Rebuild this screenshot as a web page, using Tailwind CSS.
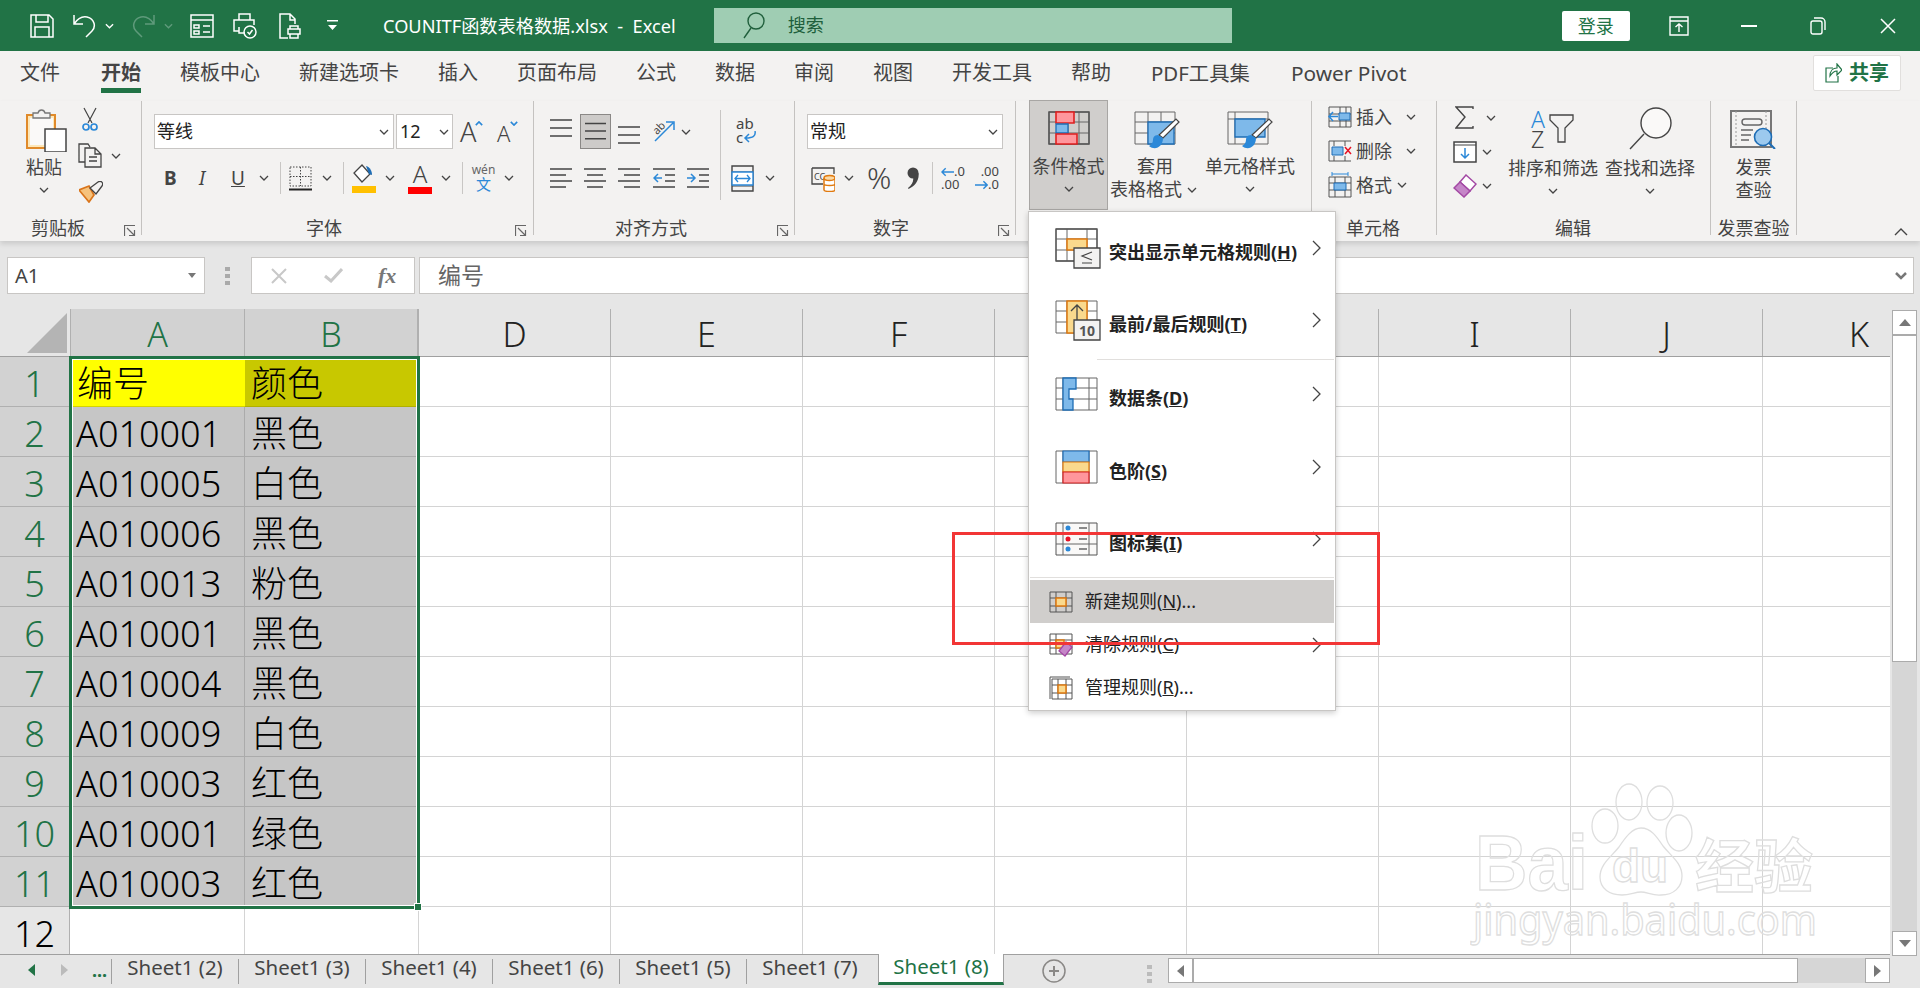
<!DOCTYPE html>
<html lang="zh-CN">
<head>
<meta charset="utf-8">
<title>COUNITF函数表格数据.xlsx - Excel</title>
<script src="https://cdn.jsdelivr.net/npm/@tailwindcss/browser@4"></script>
</head>
<body class="m-0 w-[1920px] h-[988px] overflow-hidden bg-[#e6e6e6] text-[#444] [font-family:'Noto_Sans','Noto_Sans_CJK_SC',sans-serif]">
<svg class="hidden">
<symbol id="chev" viewBox="0 0 10 6"><path d="M1 1l4 4 4-4" fill="none" stroke="#444" stroke-width="1.3"/></symbol>
<symbol id="exp" viewBox="0 0 12 12"><path d="M.5 11V.5H11M3 3l7 7M5 10.500h5.500V5" fill="none" stroke="#666" stroke-width="1.200"/></symbol>
<symbol id="right" viewBox="0 0 9 16"><path d="M1 1l7 7-7 7" fill="none" stroke="#444" stroke-width="1.300"/></symbol>
<symbol id="lines" viewBox="0 0 22 22"><path d="M0 2h22M0 10h22M0 18h22" stroke="#444" stroke-width="1.500"/></symbol>
</svg>

<!-- Title bar -->
<header class="flex items-center h-[51px] bg-[#217346] text-white">
  <svg class="ml-[30px] w-[24px] h-[24px]" viewBox="0 0 24 24" fill="none" stroke="#fff" stroke-width="1.500"><path d="M1 1h18l4 4v18H1zM6 1v7h12V1M5 23v-10h14v10"/></svg>
  <svg class="ml-[19px] w-[23px] h-[24px]" viewBox="0 0 23 24" fill="none" stroke="#fff" stroke-width="1.500"><path d="M1 1v9h9M1 10c4-6 8-8 13-7 8 2 9 10 5 14l-6 6"/></svg>
  <svg class="ml-[9px] w-[9px] h-[6px]" viewBox="0 0 10 6" fill="none" stroke="#fff" stroke-width="1.500"><path d="M1 1l4 4 4-4"/></svg>
  <svg class="ml-[18px] w-[23px] h-[24px]" viewBox="0 0 23 24" fill="none" stroke="#5f9a7b" stroke-width="1.500"><path d="M22 1v9h-9M22 10c-4-6-8-8-13-7-8 2-9 10-5 14l6 6"/></svg>
  <svg class="ml-[9px] w-[9px] h-[6px]" viewBox="0 0 10 6" fill="none" stroke="#5f9a7b" stroke-width="1.500"><path d="M1 1l4 4 4-4"/></svg>
  <svg class="ml-[17px] w-[24px] h-[24px]" viewBox="0 0 24 24" fill="none" stroke="#fff" stroke-width="1.500"><path d="M1 1h22v22H1zM1 6h22M4 11h5v3H4zM4 17h5v3H4zM13 12h7M13 18h7"/></svg>
  <svg class="ml-[19px] w-[24px] h-[26px]" viewBox="0 0 24 26" fill="none" stroke="#fff" stroke-width="1.500"><path d="M6 7V1h11v6M6 18H1V7h20v5M6 14v6h6"/><circle cx="17" cy="19" r="6"/><path d="M14.500 19l2 2 3-4"/></svg>
  <svg class="ml-[22px] w-[22px] h-[26px]" viewBox="0 0 22 26" fill="none" stroke="#fff" stroke-width="1.500"><path d="M9 25H1V1h10l5 5v5M11 1v6h5M9 16h12v5H9zM11 16v-3h8v3M11 21v4h8v-4"/></svg>
  <svg class="ml-[26px] w-[11px] h-[11px]" viewBox="0 0 11 11" fill="#fff"><path d="M0 0h11v1.500H0zM1 5h9L5.500 10z"/></svg>
  <div class="ml-[45px] text-[18.2px] leading-[24px] whitespace-pre">COUNITF函数表格数据.xlsx  -  Excel</div>
  <div class="ml-[38px] w-[518px] h-[35px] bg-[#9fcdb3] flex items-center text-[#205f3c]">
    <svg class="ml-[29px] w-[22px] h-[27px]" viewBox="0 0 22 27" fill="none" stroke="#205f3c" stroke-width="1.400"><circle cx="13" cy="9" r="8"/><path d="M8 16L1 26"/></svg>
    <span class="ml-[23px] text-[18px]">搜索</span>
  </div>
  <div class="ml-[330px] w-[68px] h-[30px] rounded-[2px] bg-white text-[#217346] text-[18px] leading-[30px] text-center">登录</div>
  <svg class="ml-[39px] w-[20px] h-[20px]" viewBox="0 0 20 20" fill="none" stroke="#fff" stroke-width="1.400"><path d="M1 1h18v18H1zM1 5h18M10 16V8M6.500 11L10 8l3.500 3"/></svg>
  <div class="ml-[52px] w-[16px] h-[2px] bg-white"></div>
  <svg class="ml-[53px] w-[16px] h-[18px]" viewBox="0 0 16 18" fill="none" stroke="#fff" stroke-width="1.400"><rect x="1" y="4" width="11" height="13" rx="2"/><path d="M4 1h7a4 4 0 0 1 4 4v8"/></svg>
  <svg class="ml-[54px] w-[16px] h-[16px]" viewBox="0 0 16 16" fill="none" stroke="#fff" stroke-width="1.500"><path d="M1 1l14 14M15 1L1 15"/></svg>
</header>

<!-- Ribbon tabs -->
<nav class="relative flex items-start h-[50px] bg-[#f3f2f1] pl-[20px] gap-[39px] text-[20px] leading-[44px] whitespace-nowrap">
  <span>文件</span>
  <span class="ml-[2px] font-bold border-b-[5px] border-[#217346] h-[42px] leading-[44px]">开始</span>
  <span>模板中心</span><span>新建选项卡</span><span>插入</span><span>页面布局</span><span>公式</span><span>数据</span><span>审阅</span><span>视图</span><span>开发工具</span><span>帮助</span><span class="ml-[1px] text-[20.4px]">PDF工具集</span><span class="ml-[2px] text-[20.8px]">Power Pivot</span>
  <div class="ml-auto mr-[19px] mt-[4px] w-[88px] h-[36px] flex items-center justify-center gap-[7px] bg-white border border-[#e1dfdd] rounded-[2px] text-[#217346] font-bold leading-none">
    <svg class="w-[17px] h-[20px]" viewBox="0 0 17 20" fill="none" stroke="#217346" stroke-width="1.200"><path d="M8 5H1v14h12v-6M5 13c0-5 3-8 7-8V1l5 6-5 5V8c-3 0-5 2-7 5z"/></svg>共享
  </div>
</nav>

<!-- Ribbon body -->
<section class="flex items-start h-[140px] bg-[#f3f2f1] shadow-[0_3px_5px_rgba(0,0,0,0.12)] text-[18px] leading-[23px] whitespace-nowrap relative">

  <!-- Clipboard -->
  <div class="w-[142px] h-[134px] shrink-0 flex flex-col border-r border-[#c4c2c0]">
    <div class="h-[115px] flex">
      <div class="w-[78px] pl-[10px] pt-[7px] flex flex-col items-center">
        <svg class="w-[41px] h-[44px] ml-[5px]" viewBox="0 0 41 44"><path d="M1 7h28v33H1z" fill="#fde7b8" stroke="#e08a2a" stroke-width="2"/><path d="M4 10h23v27H4z" fill="#faf9f8"/><path d="M7 10V5h5c1-4 6-4 7 0h5v5z" fill="#f3f2f1" stroke="#777" stroke-width="1.300"/><path d="M19 21h21v23H19z" fill="#fff" stroke="#444" stroke-width="1.500"/></svg>
        <span class="mt-[4px]">粘贴</span>
        <svg class="w-[10px] h-[6px] mt-[8px]"><use href="#chev"/></svg>
      </div>
      <div class="pt-[6px]">
        <svg class="ml-[4px] w-[16px] h-[24px] block" viewBox="0 0 16 24" fill="none"><path d="M2 1l8 15M14 1L6 16" stroke="#444" stroke-width="1.200"/><circle cx="4" cy="20" r="3" stroke="#2b88d8" stroke-width="1.700"/><circle cx="12" cy="20" r="3" stroke="#2b88d8" stroke-width="1.700"/></svg>
        <div class="flex items-center mt-[12px]">
          <svg class="w-[24px] h-[25px]" viewBox="0 0 24 25" fill="none" stroke="#444" stroke-width="1.300"><path d="M7 19H1V1h9l2 3M7 5h10l6 6v13H7zM17 5v6h6M11 14h8M11 18h8"/></svg>
          <svg class="ml-[9px] w-[10px] h-[6px]"><use href="#chev"/></svg>
        </div>
        <svg class="ml-[1px] mt-[13px] w-[24px] h-[22px] block" viewBox="0 0 24 22"><path d="M0 9l10 12 5-7-5-9z" fill="#f6c27c" stroke="#d9741a" stroke-width="1.700"/><path d="M11 7l6 6 6-8c2-3-1-6-4-4z" fill="#f3f2f1" stroke="#444" stroke-width="1.300"/></svg>
      </div>
    </div>
    <div class="h-[24px] flex items-center pl-[31px] -mb-[5px]">剪贴板<svg class="ml-auto mr-[5px] mt-[6px] w-[12px] h-[12px]"><use href="#exp"/></svg></div>
  </div>

  <!-- Font -->
  <div class="w-[392px] h-[134px] shrink-0 flex flex-col border-r border-[#c4c2c0]">
    <div class="h-[115px] pt-[13px]">
      <div class="flex items-center h-[35px] pl-[12px]">
        <div class="w-[240px] h-[35px] bg-white border border-[#c8c6c4] flex items-center pl-[2px] pr-[4px] text-[#222]">等线<svg class="ml-auto w-[10px] h-[6px]"><use href="#chev"/></svg></div>
        <div class="ml-[2px] w-[57px] h-[35px] bg-white border border-[#c8c6c4] flex items-center pl-[3px] pr-[3px] text-[#222]">12<svg class="ml-auto w-[10px] h-[6px]"><use href="#chev"/></svg></div>
        <div class="ml-[7px] w-[23px] h-[30px] relative text-[27px] leading-[30px] font-light">A<svg class="absolute right-0 top-[4px] w-[8px] h-[5px]" viewBox="0 0 10 6" fill="none" stroke="#2b88d8" stroke-width="2"><path d="M1 5l4-4 4 4"/></svg></div>
        <div class="ml-[14px] w-[21px] h-[30px] relative text-[22px] leading-[32px] font-light">A<svg class="absolute right-0 top-[4px] w-[8px] h-[5px]" viewBox="0 0 10 6" fill="none" stroke="#2b88d8" stroke-width="2"><path d="M1 1l4 4 4-4"/></svg></div>
      </div>
      <div class="flex items-center h-[34px] mt-[12px] pl-[22px]">
        <span class="w-[13px] font-bold text-[19px]">B</span>
        <span class="ml-[22px] w-[11px] italic text-[19px]">I</span>
        <span class="ml-[21px] w-[13px] underline text-[19px]">U</span>
        <svg class="ml-[15px] w-[10px] h-[6px]"><use href="#chev"/></svg>
        <div class="ml-[11px] w-[1px] h-[32px] bg-[#c8c6c4]"></div>
        <svg class="ml-[8px] w-[23px] h-[25px]" viewBox="0 0 23 25" fill="none"><path d="M1 1h21v19H1zM11.500 1v19M1 10.500h21" stroke="#444" stroke-dasharray="1.500 1.500"/><path d="M0 23.500h23" stroke="#222" stroke-width="2"/></svg>
        <svg class="ml-[10px] w-[10px] h-[6px]"><use href="#chev"/></svg>
        <div class="ml-[11px] w-[1px] h-[32px] bg-[#c8c6c4]"></div>
        <svg class="ml-[8px] w-[24px] h-[30px]" viewBox="0 0 24 30"><path d="M10 2l8 9-8 8-8-9z" fill="#fff" stroke="#444" stroke-width="1.300"/><path d="M14 3c4 1 6 5 6 9l-3-1z" fill="#1e6db5"/><rect y="23" width="24" height="7" fill="#ffc000"/></svg>
        <svg class="ml-[9px] w-[10px] h-[6px]"><use href="#chev"/></svg>
        <div class="ml-[13px] w-[24px] h-[32px] flex flex-col items-center text-[24px] leading-[24px] font-light">A<div class="w-[24px] h-[7px] bg-[#ff0000] mt-[1px]"></div></div>
        <svg class="ml-[9px] w-[10px] h-[6px]"><use href="#chev"/></svg>
        <div class="ml-[11px] w-[1px] h-[32px] bg-[#c8c6c4]"></div>
        <div class="ml-[9px] w-[23px] flex flex-col items-center text-[12px] leading-[13px] text-[#666]">wén<span class="text-[#2b88d8] text-[15px] leading-[17px]">文</span></div>
        <svg class="ml-[9px] w-[10px] h-[6px]"><use href="#chev"/></svg>
      </div>
    </div>
    <div class="h-[24px] flex items-center pl-[164px] -mb-[5px]">字体<svg class="ml-auto mr-[6px] mt-[6px] w-[12px] h-[12px]"><use href="#exp"/></svg></div>
  </div>

  <!-- Alignment -->
  <div class="w-[261px] h-[134px] shrink-0 flex flex-col border-r border-[#c4c2c0]">
    <div class="h-[115px] flex pl-[16px]">
      <div class="w-[170px] pt-[13px]">
        <div class="flex items-center h-[35px]">
          <svg class="w-[22px] h-[22px] -mt-[6px]"><use href="#lines"/></svg>
          <div class="ml-[8px] w-[31px] h-[35px] bg-[#cdcbc9] border border-[#8a8886] flex items-center justify-center"><svg class="w-[21px] h-[22px]"><use href="#lines"/></svg></div>
          <svg class="ml-[7px] w-[22px] h-[22px] mt-[8px]"><use href="#lines"/></svg>
          <svg class="ml-[12px] w-[25px] h-[25px]" viewBox="0 0 25 25" fill="none"><path d="M3 22L21 4M14 3h8v8" stroke="#2b88d8" stroke-width="1.500"/><text x="1" y="13" font-size="11" fill="#444" transform="rotate(-45 7 10)">ab</text></svg>
          <svg class="ml-[4px] w-[10px] h-[6px]"><use href="#chev"/></svg>
        </div>
        <div class="flex items-center h-[34px] mt-[12px]">
          <svg class="w-[22px] h-[22px]" viewBox="0 0 22 22" stroke="#444" stroke-width="1.500"><path d="M0 2h22M0 8h16M0 14h22M0 20h16"/></svg>
          <svg class="ml-[12px] w-[22px] h-[22px]" viewBox="0 0 22 22" stroke="#444" stroke-width="1.500"><path d="M0 2h22M3 8h16M0 14h22M3 20h16"/></svg>
          <svg class="ml-[12px] w-[22px] h-[22px]" viewBox="0 0 22 22" stroke="#444" stroke-width="1.500"><path d="M0 2h22M6 8h16M0 14h22M6 20h16"/></svg>
          <svg class="ml-[13px] w-[22px] h-[22px]" viewBox="0 0 22 22" fill="none" stroke-width="1.500"><path d="M0 2h22M12 8h10M12 14h10M0 20h22" stroke="#444"/><path d="M9 11H1M5 7l-4 4 4 4" stroke="#2b88d8"/></svg>
          <svg class="ml-[12px] w-[22px] h-[22px]" viewBox="0 0 22 22" fill="none" stroke-width="1.500"><path d="M0 2h22M12 8h10M12 14h10M0 20h22" stroke="#444"/><path d="M0 11h8M4 7l4 4-4 4" stroke="#2b88d8"/></svg>
        </div>
      </div>
      <div class="w-[1px] h-[90px] mt-[9px] bg-[#c8c6c4]"></div>
      <div class="pl-[10px] pt-[15px]">
        <div class="h-[33px] flex flex-col items-start leading-[14px] text-[15px] ml-[5px] w-[24px]"><span>ab</span><span class="flex items-center">c<svg class="w-[14px] h-[12px]" viewBox="0 0 14 12" fill="none" stroke="#2b88d8" stroke-width="1.500"><path d="M12 0c1 5-2 7-9 7M6 3L2 7l4 4"/></svg></span></div>
        <div class="flex items-center h-[34px] mt-[12px]">
          <svg class="w-[23px] h-[27px]" viewBox="0 0 23 27" fill="none"><path d="M1 1h21v25H1z" stroke="#444" stroke-width="1.400"/><path d="M1 7h21M1 21h21" stroke="#444"/><path d="M1 7h21v13H1z" fill="#fff" stroke="#2b88d8" stroke-width="1.400"/><path d="M4 13.500h15M7 10l-3 3.500L7 17M16 10l3 3.500-3 3.500" stroke="#2b88d8" stroke-width="1.300"/></svg>
          <svg class="ml-[11px] w-[10px] h-[6px]"><use href="#chev"/></svg>
        </div>
      </div>
    </div>
    <div class="h-[24px] flex items-center pl-[81px] -mb-[5px]">对齐方式<svg class="ml-auto mr-[5px] mt-[6px] w-[12px] h-[12px]"><use href="#exp"/></svg></div>
  </div>

  <!-- Number -->
  <div class="w-[221px] h-[134px] shrink-0 flex flex-col border-r border-[#c4c2c0]">
    <div class="h-[115px] pt-[13px] pl-[12px]">
      <div class="w-[196px] h-[35px] bg-white border border-[#c8c6c4] flex items-center pl-[2px] pr-[4px] text-[#222]">常规<svg class="ml-auto w-[10px] h-[6px]"><use href="#chev"/></svg></div>
      <div class="flex items-center h-[34px] mt-[12px] pl-[4px]">
        <svg class="w-[24px] h-[27px]" viewBox="0 0 24 27" fill="none"><path d="M1 3h22v6M1 3v16h11" stroke="#444" stroke-width="1.300"/><text x="3" y="15" font-size="9" fill="#444">CC</text><path d="M13 12h11v15H13z" fill="#fff"/><ellipse cx="18.500" cy="13" rx="5.500" ry="2.500" fill="#fbd9a5" stroke="#e07a10" stroke-width="1.500"/><path d="M13 13v12c0 2 11 2 11 0V13M13 19c0 2 11 2 11 0" stroke="#e07a10" stroke-width="1.500"/></svg>
        <svg class="ml-[9px] w-[10px] h-[6px]"><use href="#chev"/></svg>
        <span class="ml-[13px] w-[25px] text-[30px] leading-[30px] font-light">%</span>
        <svg class="ml-[14px] w-[13px] h-[23px]" viewBox="0 0 13 23" fill="#444"><circle cx="7" cy="6" r="5.500"/><path d="M12.500 6c1 7-3 13-10 16l-.5-1c4-3 6-7 5-11z"/></svg>
        <div class="ml-[13px] w-[1px] h-[32px] bg-[#c8c6c4]"></div>
        <div class="ml-[8px] w-[24px] text-[13px] leading-[13px]"><span class="flex items-center justify-end"><svg class="w-[14px] h-[10px]" viewBox="0 0 14 10" fill="none" stroke="#2b88d8" stroke-width="1.500"><path d="M14 5H1M5 1L1 5l4 4"/></svg>.0</span>.00</div>
        <div class="ml-[10px] w-[24px] text-[13px] leading-[13px] text-right">.00<span class="flex items-center justify-end"><svg class="w-[14px] h-[10px]" viewBox="0 0 14 10" fill="none" stroke="#2b88d8" stroke-width="1.500"><path d="M0 5h13M9 1l4 4-4 4"/></svg>.0</span></div>
      </div>
    </div>
    <div class="h-[24px] flex items-center pl-[78px] -mb-[5px]">数字<svg class="ml-auto mr-[5px] mt-[6px] w-[12px] h-[12px]"><use href="#exp"/></svg></div>
  </div>

  <!-- Styles -->
  <div class="w-[296px] h-[134px] shrink-0 flex flex-col border-r border-[#c4c2c0]">
    <div class="h-[115px] flex pl-[13px]">
      <div class="w-[79px] h-[110px] -mt-[1px] bg-[#d0cecc] border border-[#a8a6a4] flex flex-col items-center pt-[10px]">
        <svg class="w-[42px] h-[34px]" viewBox="0 0 42 34" fill="none"><path d="M1 1h40v32H1zM1 11h40M1 22h40M10 1v32M20 1v32M31 1v32" stroke="#666" stroke-width="1"/><path d="M1 1h40v32H1z" stroke="#555" stroke-width="1.500"/><path d="M8 1h18v11H8z" fill="#ff969c" stroke="#e02020" stroke-width="1.600"/><path d="M8 13h12v9H8z" fill="#7eb9ea" stroke="#1e6db5" stroke-width="1.300"/><path d="M8 23h21v10H8z" fill="#ff969c" stroke="#e02020" stroke-width="1.600"/></svg>
        <span class="mt-[10px]">条件格式</span>
        <svg class="w-[10px] h-[6px] mt-[8px]"><use href="#chev"/></svg>
      </div>
      <div class="w-[90px] pl-[2px] pt-[10px] flex flex-col items-start">
        <svg class="ml-[24px] w-[46px] h-[41px] -mb-[7px]" viewBox="0 0 46 41" fill="none"><path d="M1 1h40v32H1zM1 11h40M1 22h40M14 1v32M27 1v32" stroke="#666"/><path d="M14 11h26v22H14z" fill="#7eb9ea" stroke="#1e6db5" stroke-width="1.300"/><path d="M45 11L29 27l-4-3L42 8z" fill="#fff" stroke="#444" stroke-width="1.200"/><path d="M24 24c-4 0-5 3-5 5 0 3-2 5-4 6 6 5 14 1 14-8z" fill="#2b88d8"/></svg>
        <span class="ml-[27px] mt-[10px]">套用</span>
        <span class="flex items-center">表格格式<svg class="ml-[5px] w-[10px] h-[6px]"><use href="#chev"/></svg></span>
      </div>
      <div class="w-[92px] ml-[6px] pt-[10px] flex flex-col items-center">
        <svg class="w-[46px] h-[41px] -mb-[7px]" viewBox="0 0 46 41" fill="none"><path d="M1 1h40v32H1zM1 8h40M8 1v32" stroke="#666"/><path d="M8 8h30v18H8z" fill="#7eb9ea" stroke="#1e6db5" stroke-width="1.300"/><path d="M45 11L29 27l-4-3L42 8z" fill="#fff" stroke="#444" stroke-width="1.200"/><path d="M24 24c-4 0-5 3-5 5 0 3-2 5-4 6 6 5 14 1 14-8z" fill="#2b88d8"/></svg>
        <span class="mt-[10px]">单元格样式</span>
        <svg class="w-[10px] h-[6px] mt-[8px]"><use href="#chev"/></svg>
      </div>
    </div>
    <div class="h-[24px] flex items-center justify-center -mb-[5px]">样式</div>
  </div>

  <!-- Cells -->
  <div class="w-[125px] h-[134px] shrink-0 flex flex-col border-r border-[#c4c2c0]">
    <div class="h-[115px] pl-[16px] pt-[4px] flex flex-col gap-[10px]">
      <div class="flex items-center h-[24px]">
        <svg class="w-[24px] h-[22px]" viewBox="0 0 24 22" fill="none"><path d="M1 1h22v20H1zM1 8h22M1 15h22M12 1v20M18 1v20" stroke="#555"/><path d="M11 7h11v7H11z" fill="#7eb9ea" stroke="#1e6db5"/><path d="M10 10.500H1M5 6l-4 4.500L5 15" stroke="#2b88d8" stroke-width="1.500"/></svg>
        <span class="ml-[4px]">插入</span><svg class="ml-[14px] w-[10px] h-[6px]"><use href="#chev"/></svg>
      </div>
      <div class="flex items-center h-[24px]">
        <svg class="w-[24px] h-[24px]" viewBox="0 0 24 24" fill="none"><path d="M1 2h22M1 22h22M1 2v20M6 2v5M6 17v5M17 2v5M17 17v5" stroke="#555"/><path d="M4 8h11v8H4z" fill="#7eb9ea" stroke="#1e6db5"/><path d="M17 8l6 7M23 8l-6 7" stroke="#e81123" stroke-width="1.500"/></svg>
        <span class="ml-[4px]">删除</span><svg class="ml-[14px] w-[10px] h-[6px]"><use href="#chev"/></svg>
      </div>
      <div class="flex items-center h-[24px]">
        <svg class="w-[24px] h-[26px]" viewBox="0 0 24 26" fill="none"><path d="M1 5h22v20H1zM1 11h22M1 18h22M7 5v20M17 5v20" stroke="#555"/><path d="M6 11h12v7H6z" fill="#7eb9ea" stroke="#1e6db5"/><path d="M4 2h16M4 0v4M20 0v4" stroke="#2b88d8"/></svg>
        <span class="ml-[4px]">格式</span><svg class="ml-[5px] w-[10px] h-[6px]"><use href="#chev"/></svg>
      </div>
    </div>
    <div class="h-[24px] flex items-center pl-[34px] -mb-[5px]">单元格</div>
  </div>

  <!-- Editing -->
  <div class="w-[274px] h-[134px] shrink-0 flex flex-col border-r border-[#c4c2c0]">
    <div class="h-[115px] flex">
      <div class="w-[71px] pl-[16px] pt-[4px] flex flex-col gap-[9px]">
        <div class="flex items-center h-[25px]"><svg class="ml-[2px] w-[19px] h-[23px]" viewBox="0 0 19 23" fill="none" stroke="#444" stroke-width="1.400"><path d="M18 3V1H1l9 10-9 11h17v-2"/></svg><svg class="ml-[12px] w-[10px] h-[6px]"><use href="#chev"/></svg></div>
        <div class="flex items-center h-[25px]"><svg class="w-[24px] h-[22px]" viewBox="0 0 24 22" fill="none"><path d="M1 1h22v20H1z" fill="#fff" stroke="#444" stroke-width="1.500"/><path d="M1 4h22" stroke="#444"/><path d="M12 7v10M8 13l4 4 4-4" stroke="#2b88d8" stroke-width="1.500"/></svg><svg class="ml-[5px] w-[10px] h-[6px]"><use href="#chev"/></svg></div>
        <div class="flex items-center h-[25px]"><svg class="w-[24px] h-[24px]" viewBox="0 0 24 24" fill="none"><path d="M13 1l10 9-6 7-10-9z" fill="#fff" stroke="#a349a4" stroke-width="1.500"/><path d="M7 8l10 9-6 6-10-9z" fill="#c586c8" stroke="#a349a4" stroke-width="1.500"/></svg><svg class="ml-[5px] w-[10px] h-[6px]"><use href="#chev"/></svg></div>
      </div>
      <div class="w-[90px] flex flex-col items-center pt-[7px]">
        <div class="flex items-center h-[41px] text-[23px] leading-[20px] -ml-[1px]"><span class="flex flex-col font-light w-[18px]"><span class="text-[#2b88d8]">A</span><span>Z</span></span><svg class="w-[25px] h-[30px]" viewBox="0 0 25 30" fill="none" stroke="#444" stroke-width="1.300"><path d="M1 1h23v5l-8 8v14H9V14L1 6z"/></svg></div>
        <span class="mt-[8px]">排序和筛选</span>
        <svg class="w-[10px] h-[6px] mt-[8px]"><use href="#chev"/></svg>
      </div>
      <div class="w-[90px] ml-[7px] flex flex-col items-center pt-[6px]">
        <svg class="w-[43px] h-[43px]" viewBox="0 0 43 43" fill="#faf9f8" stroke="#444" stroke-width="1.400"><circle cx="27" cy="16" r="15"/><path d="M15 27L1 42" fill="none"/></svg>
        <span class="mt-[7px]">查找和选择</span>
        <svg class="w-[10px] h-[6px] mt-[8px]"><use href="#chev"/></svg>
      </div>
    </div>
    <div class="h-[24px] flex items-center pl-[118px] -mb-[5px]">编辑</div>
  </div>

  <!-- Invoice -->
  <div class="w-[86px] h-[134px] shrink-0 flex flex-col border-r border-[#c4c2c0]">
    <div class="h-[115px] flex flex-col items-center pt-[9px]">
      <svg class="w-[47px] h-[39px]" viewBox="0 0 47 39" fill="none"><path d="M1 1h40v36H1z" fill="#f3f2f1" stroke="#777" stroke-width="2"/><path d="M6 1v36M36 1v36" stroke="#999" stroke-dasharray="2 2"/><rect x="12" y="9" width="20" height="6" rx="3" stroke="#666" stroke-width="1.400"/><path d="M11 20h12M11 25h10M11 30h8" stroke="#666" stroke-width="1.400"/><circle cx="33" cy="27" r="8.500" fill="#9cc9ee" stroke="#1e6db5" stroke-width="1.600"/><path d="M39 33l6 6" stroke="#1e6db5" stroke-width="2"/></svg>
      <span class="mt-[7px]">发票</span>
      <span>查验</span>
    </div>
    <div class="h-[24px] flex items-center justify-center -mb-[5px]">发票查验</div>
  </div>

  <div class="flex-1 h-[134px] flex items-end justify-end pr-[12px]">
    <svg class="w-[14px] h-[8px] -mb-[1px]" viewBox="0 0 14 8" fill="none" stroke="#444" stroke-width="1.400"><path d="M1 7l6-6 6 6"/></svg>
  </div>
</section>

<!-- Formula bar -->
<div class="flex items-start h-[68px] pt-[16px] bg-[#e6e6e6]">
  <div class="ml-[7px] w-[198px] h-[37px] bg-white border border-[#c8c6c4] flex items-center pl-[7px] pr-[8px] text-[20px] text-[#444]">A1<svg class="ml-auto w-[8px] h-[5px]" viewBox="0 0 8 5" fill="#777"><path d="M0 0h8L4 5z"/></svg></div>
  <div class="ml-[20px] w-[5px] h-[37px] flex flex-col justify-center gap-[3px]"><div class="h-[4px] bg-[#aaa]"></div><div class="h-[4px] bg-[#aaa]"></div><div class="h-[4px] bg-[#aaa]"></div></div>
  <div class="ml-[21px] w-[164px] h-[37px] bg-white border border-[#c8c6c4] flex items-center">
    <svg class="ml-[19px] w-[16px] h-[16px]" viewBox="0 0 16 16" fill="none" stroke="#c8c8c8" stroke-width="2"><path d="M1 1l14 14M15 1L1 15"/></svg>
    <svg class="ml-[37px] w-[19px] h-[15px]" viewBox="0 0 19 15" fill="none" stroke="#c8c8c8" stroke-width="3"><path d="M1 8l6 5L18 1"/></svg>
    <span class="ml-[35px] text-[22px] italic font-bold text-[#777] [font-family:'Liberation_Serif',serif]">fx</span>
  </div>
  <div class="ml-[4px] w-[1495px] h-[37px] bg-white border border-[#c8c6c4] flex items-center pl-[18px] pr-[6px] text-[23px] text-[#666]">编号<svg class="ml-auto w-[12px] h-[8px]" viewBox="0 0 12 8" fill="none" stroke="#777" stroke-width="2.500"><path d="M1 1l5 5 5-5"/></svg></div>
</div>

<!-- Grid -->
<div class="flex h-[645px]">
  <div class="relative w-[1890px] overflow-hidden">
    <!-- Column headers -->
    <div class="flex h-[48px] text-[34px] leading-[50px] text-center font-light border-b-[1px] border-[#a0a0a0]">
      <div class="w-[70px] shrink-0 flex items-end justify-end pr-[3px] pb-[3px]"><svg class="w-[40px] h-[40px]" viewBox="0 0 40 40" fill="#b4b4b4"><path d="M40 0v40H0z"/></svg></div>
      <div class="w-[175px] shrink-0 bg-[#d2d2d2] text-[#217346] border-x border-[#b0b0b0]">A</div>
      <div class="w-[174px] shrink-0 bg-[#d2d2d2] text-[#217346] border-r-[2px] border-[#b0b0b0]">B</div>
      <div class="w-[192px] shrink-0 border-r border-[#b0b0b0] text-[#222]">D</div>
      <div class="w-[192px] shrink-0 border-r border-[#b0b0b0] text-[#222]">E</div>
      <div class="w-[192px] shrink-0 border-r border-[#b0b0b0] text-[#222]">F</div>
      <div class="w-[192px] shrink-0 border-r border-[#b0b0b0] text-[#222]">G</div>
      <div class="w-[192px] shrink-0 border-r border-[#b0b0b0] text-[#222]">H</div>
      <div class="w-[192px] shrink-0 border-r border-[#b0b0b0] text-[#222]">I</div>
      <div class="w-[192px] shrink-0 border-r border-[#b0b0b0] text-[#222]">J</div>
      <div class="w-[192px] shrink-0 text-[#222]">K</div>
    </div>
    <!-- Rows -->
    <div class="flex h-[597px]">
      <div class="w-[419px] shrink-0 text-[36px] leading-[54px] text-black font-light">
        <div class="flex h-[50px]"><div class="w-[70px] text-center bg-[#d2d2d2] text-[#217346] border-b border-r border-[#b0b0b0]">1</div><div class="w-[175px] pl-[7px] bg-[#ffff00] border-b border-[#d4d400]">编号</div><div class="w-[174px] pl-[6px] bg-[#c8c800] border-b border-[#b0b000]">颜色</div></div>
        <div class="flex h-[50px]"><div class="w-[70px] text-center bg-[#d2d2d2] text-[#217346] border-b border-r border-[#b0b0b0]">2</div><div class="w-[175px] pl-[6px] bg-[#c6c6c6] border-b border-r border-[#ababab]">A010001</div><div class="w-[174px] pl-[6px] bg-[#c6c6c6] border-b border-[#ababab]">黑色</div></div>
        <div class="flex h-[50px]"><div class="w-[70px] text-center bg-[#d2d2d2] text-[#217346] border-b border-r border-[#b0b0b0]">3</div><div class="w-[175px] pl-[6px] bg-[#c6c6c6] border-b border-r border-[#ababab]">A010005</div><div class="w-[174px] pl-[6px] bg-[#c6c6c6] border-b border-[#ababab]">白色</div></div>
        <div class="flex h-[50px]"><div class="w-[70px] text-center bg-[#d2d2d2] text-[#217346] border-b border-r border-[#b0b0b0]">4</div><div class="w-[175px] pl-[6px] bg-[#c6c6c6] border-b border-r border-[#ababab]">A010006</div><div class="w-[174px] pl-[6px] bg-[#c6c6c6] border-b border-[#ababab]">黑色</div></div>
        <div class="flex h-[50px]"><div class="w-[70px] text-center bg-[#d2d2d2] text-[#217346] border-b border-r border-[#b0b0b0]">5</div><div class="w-[175px] pl-[6px] bg-[#c6c6c6] border-b border-r border-[#ababab]">A010013</div><div class="w-[174px] pl-[6px] bg-[#c6c6c6] border-b border-[#ababab]">粉色</div></div>
        <div class="flex h-[50px]"><div class="w-[70px] text-center bg-[#d2d2d2] text-[#217346] border-b border-r border-[#b0b0b0]">6</div><div class="w-[175px] pl-[6px] bg-[#c6c6c6] border-b border-r border-[#ababab]">A010001</div><div class="w-[174px] pl-[6px] bg-[#c6c6c6] border-b border-[#ababab]">黑色</div></div>
        <div class="flex h-[50px]"><div class="w-[70px] text-center bg-[#d2d2d2] text-[#217346] border-b border-r border-[#b0b0b0]">7</div><div class="w-[175px] pl-[6px] bg-[#c6c6c6] border-b border-r border-[#ababab]">A010004</div><div class="w-[174px] pl-[6px] bg-[#c6c6c6] border-b border-[#ababab]">黑色</div></div>
        <div class="flex h-[50px]"><div class="w-[70px] text-center bg-[#d2d2d2] text-[#217346] border-b border-r border-[#b0b0b0]">8</div><div class="w-[175px] pl-[6px] bg-[#c6c6c6] border-b border-r border-[#ababab]">A010009</div><div class="w-[174px] pl-[6px] bg-[#c6c6c6] border-b border-[#ababab]">白色</div></div>
        <div class="flex h-[50px]"><div class="w-[70px] text-center bg-[#d2d2d2] text-[#217346] border-b border-r border-[#b0b0b0]">9</div><div class="w-[175px] pl-[6px] bg-[#c6c6c6] border-b border-r border-[#ababab]">A010003</div><div class="w-[174px] pl-[6px] bg-[#c6c6c6] border-b border-[#ababab]">红色</div></div>
        <div class="flex h-[50px]"><div class="w-[70px] text-center bg-[#d2d2d2] text-[#217346] border-b border-r border-[#b0b0b0]">10</div><div class="w-[175px] pl-[6px] bg-[#c6c6c6] border-b border-r border-[#ababab]">A010001</div><div class="w-[174px] pl-[6px] bg-[#c6c6c6] border-b border-[#ababab]">绿色</div></div>
        <div class="flex h-[50px]"><div class="w-[70px] text-center bg-[#d2d2d2] text-[#217346] border-b border-r border-[#b0b0b0]">11</div><div class="w-[175px] pl-[6px] bg-[#c6c6c6] border-b border-r border-[#ababab]">A010003</div><div class="w-[174px] pl-[6px] bg-[#c6c6c6] border-b border-[#ababab]">红色</div></div>
        <div class="flex h-[47px]"><div class="w-[70px] h-[47px] overflow-hidden text-center bg-[#e6e6e6] border-r border-[#b0b0b0]">12</div><div class="w-[175px] bg-white border-r border-[#d4d4d4]"></div><div class="w-[174px] bg-white border-r border-[#d4d4d4]"></div></div>
      </div>
      <div class="flex-1 bg-white bg-[linear-gradient(to_right,transparent_191px,#d4d4d4_191px),linear-gradient(to_bottom,transparent_49px,#d4d4d4_49px)] bg-[size:192px_50px]"></div>
    </div>
    <!-- Selection outline -->
    <div class="absolute left-[69px] top-[47px] w-[351px] h-[553px] border-[3px] border-[#217346] shadow-[inset_0_0_0_1px_#fff]"></div>
    <div class="absolute left-[414px] top-[594px] w-[8px] h-[8px] bg-[#217346] border border-white"></div>
    <!-- Baidu watermark -->
    <svg class="absolute left-[1470px] top-[471px] w-[350px] h-[170px]" viewBox="0 0 350 170" fill="none" stroke="#dedede" stroke-width="1.300">
      <text x="5" y="110" font-size="78" font-weight="700" font-family="Liberation Sans" textLength="113" lengthAdjust="spacingAndGlyphs">Bai</text>
      <ellipse cx="159" cy="22" rx="13" ry="18"/><ellipse cx="190" cy="23" rx="13" ry="17"/><ellipse cx="135" cy="46" rx="13" ry="17"/><ellipse cx="209" cy="53" rx="13" ry="18"/>
      <path d="M171 48c-9 0-16 10-22 19-8 10-19 17-19 30 0 12 10 18 22 18 8 0 13-3 19-3s12 4 20 3c13 0 21-8 21-19 0-13-11-20-19-30-6-9-12-18-22-18z"/>
      <text x="142" y="102" font-size="46" font-weight="700" font-family="Liberation Sans" textLength="56" lengthAdjust="spacingAndGlyphs">du</text>
      <text x="225" y="108" font-size="59" font-weight="700" font-family="Noto Sans CJK SC">经验</text>
      <text x="3" y="155" font-size="42" font-family="Noto Sans" textLength="344" lengthAdjust="spacingAndGlyphs">jingyan.baidu.com</text>
    </svg>
  </div>
  <!-- Vertical scrollbar -->
  <div class="w-[30px] pt-[1px] pl-[2px] flex flex-col h-[647px]">
    <div class="w-[25px] h-[25px] bg-white border border-[#ababab] flex items-center justify-center"><svg class="w-[12px] h-[7px]" viewBox="0 0 12 7" fill="#777"><path d="M0 7h12L6 0z"/></svg></div>
    <div class="w-[25px] h-[327px] bg-white border border-[#ababab]"></div>
    <div class="w-[25px] h-[269px] bg-[#d6d6d6]"></div>
    <div class="w-[25px] h-[25px] bg-white border border-[#ababab] flex items-center justify-center"><svg class="w-[12px] h-[7px]" viewBox="0 0 12 7" fill="#777"><path d="M0 0h12L6 7z"/></svg></div>
  </div>
</div>

<!-- Sheet tabs -->
<footer class="flex items-start h-[33px] w-[1890px] text-[20.5px] leading-[24px] whitespace-nowrap">
  <div class="w-[878px] h-[33px] border-t border-[#a0a0a0] flex items-start">
    <svg class="ml-[28px] mt-[9px] w-[7px] h-[12px]" viewBox="0 0 7 12" fill="#217346"><path d="M7 0v12L0 6z"/></svg>
    <svg class="ml-[26px] mt-[9px] w-[7px] h-[12px]" viewBox="0 0 7 12" fill="#bbb"><path d="M0 0v12l7-6z"/></svg>
    <span class="ml-[24px] mt-[3px] w-[18px] text-[18px] text-[#217346] font-bold leading-[24px]">...</span>
    <div class="ml-[1px] w-[1px] h-[25px] mt-[4px] bg-[#a0a0a0]"></div>
    <span class="w-[126px] text-center">Sheet1 (2)</span><div class="w-[1px] h-[25px] mt-[4px] bg-[#a0a0a0]"></div>
    <span class="w-[126px] text-center">Sheet1 (3)</span><div class="w-[1px] h-[25px] mt-[4px] bg-[#a0a0a0]"></div>
    <span class="w-[126px] text-center">Sheet1 (4)</span><div class="w-[1px] h-[25px] mt-[4px] bg-[#a0a0a0]"></div>
    <span class="w-[126px] text-center">Sheet1 (6)</span><div class="w-[1px] h-[25px] mt-[4px] bg-[#a0a0a0]"></div>
    <span class="w-[126px] text-center">Sheet1 (5)</span><div class="w-[1px] h-[25px] mt-[4px] bg-[#a0a0a0]"></div>
    <span class="w-[126px] text-center">Sheet1 (7)</span>
  </div>
  <div class="w-[126px] h-[31px] bg-white border-b-[3px] border-[#217346] border-x border-x-[#a0a0a0] text-center text-[#217346]">Sheet1 (8)</div>
  <div class="flex-1 h-[33px] border-t border-[#a0a0a0] flex items-start">
    <svg class="ml-[38px] mt-[4px] w-[24px] h-[24px] shrink-0" viewBox="0 0 24 24" fill="none" stroke="#8a8886" stroke-width="1.500"><circle cx="12" cy="12" r="11"/><path d="M12 7v10M7 12h10" stroke-width="2"/></svg>
    <div class="ml-[81px] mt-[10px] w-[5px] shrink-0 flex flex-col gap-[3px]"><div class="h-[4px] bg-[#bbb]"></div><div class="h-[4px] bg-[#bbb]"></div><div class="h-[4px] bg-[#bbb]"></div></div>
    <div class="ml-[16px] mt-[3px] flex h-[25px] flex-1 bg-[#d6d6d6]">
      <div class="w-[25px] bg-white border border-[#ababab] flex items-center justify-center"><svg class="w-[7px] h-[12px]" viewBox="0 0 7 12" fill="#777"><path d="M7 0v12L0 6z"/></svg></div>
      <div class="w-[605px] bg-white border border-[#ababab]"></div>
      <div class="ml-auto w-[25px] bg-white border border-[#ababab] flex items-center justify-center"><svg class="w-[7px] h-[12px]" viewBox="0 0 7 12" fill="#777"><path d="M0 0v12l7-6z"/></svg></div>
    </div>
  </div>
</footer>

<!-- Conditional-formatting dropdown -->
<div class="absolute left-[1028px] top-[211px] w-[308px] h-[500px] bg-white border border-[#c8c6c4] shadow-[0_2px_6px_rgba(0,0,0,0.2)] text-[18px] text-[#222] whitespace-nowrap pt-[3px] px-[1px]">
  <div class="flex items-center h-[72px] pl-[25px] pr-[13px] font-bold">
    <svg class="w-[46px] h-[41px] -mt-[6px]" viewBox="0 0 46 41" fill="none"><path d="M1 1h41v32H1zM1 11h41M1 22h41M12 1v32M32 1v32" stroke="#666"/><path d="M1 1h41v32H1z" stroke="#555" stroke-width="1.300"/><path d="M12 11h20v11H12z" fill="#fad98d" stroke="#e07a10" stroke-width="1.500"/><path d="M19 20h26v20H19z" fill="#f3f2f1" stroke="#444" stroke-width="1.300"/><path d="M37 24l-10 4 10 4M27 35h10" stroke="#444" stroke-width="1.200"/></svg>
    <span class="ml-[8px] mt-[2px]">突出显示单元格规则(<span class="underline">H</span>)</span>
    <svg class="ml-auto w-[9px] h-[16px] -mt-[7px]"><use href="#right"/></svg>
  </div>
  <div class="flex items-center h-[72px] pl-[25px] pr-[13px] font-bold">
    <svg class="w-[46px] h-[41px] -mt-[6px]" viewBox="0 0 46 41" fill="none"><path d="M1 1h41v32H1zM1 11h41M1 22h41M12 1v32M32 1v32" stroke="#666"/><path d="M12 1h20v32H12z" fill="#fad98d" stroke="#e07a10" stroke-width="1.500"/><path d="M22 20V5M16 11l6-6 6 6" stroke="#444" stroke-width="1.300"/><path d="M19 20h26v20H19z" fill="#f3f2f1" stroke="#444" stroke-width="1.300"/><text x="24" y="36" font-size="14" fill="#555" stroke="none">10</text></svg>
    <span class="ml-[8px] mt-[2px]">最前/最后规则(<span class="underline">T</span>)</span>
    <svg class="ml-auto w-[9px] h-[16px] -mt-[7px]"><use href="#right"/></svg>
  </div>
  <div class="ml-[67px] h-[1px] bg-[#e1dfdd]"></div>
  <div class="flex items-center h-[74px] pl-[25px] pr-[13px] font-bold">
    <svg class="w-[46px] h-[34px] -mt-[6px]" viewBox="0 0 46 34" fill="none"><path d="M1 1h41v32H1zM1 11h41M1 22h41M8 1v32M34 1v32" stroke="#666"/><path d="M8 1h13v11H14v10h4v11H8z" fill="#7eb9ea" stroke="#1e6db5" stroke-width="1.300"/></svg>
    <span class="ml-[8px] mt-[2px]">数据条(<span class="underline">D</span>)</span>
    <svg class="ml-auto w-[9px] h-[16px] -mt-[7px]"><use href="#right"/></svg>
  </div>
  <div class="flex items-center h-[72px] pl-[25px] pr-[13px] font-bold">
    <svg class="w-[46px] h-[34px] -mt-[6px]" viewBox="0 0 46 34" fill="none"><path d="M1 1h41v32H1zM8 1v32M34 1v32" stroke="#666"/><path d="M8 1h26v11H8z" fill="#7eb9ea" stroke="#1e6db5" stroke-width="1.200"/><path d="M8 12h26v10H8z" fill="#fad98d" stroke="#e07a10" stroke-width="1.200"/><path d="M8 22h26v11H8z" fill="#ff969c" stroke="#d32020" stroke-width="1.200"/></svg>
    <span class="ml-[8px] mt-[2px]">色阶(<span class="underline">S</span>)</span>
    <svg class="ml-auto w-[9px] h-[16px] -mt-[7px]"><use href="#right"/></svg>
  </div>
  <div class="flex items-center h-[72px] pl-[25px] pr-[13px] font-bold">
    <svg class="w-[46px] h-[34px] -mt-[6px]" viewBox="0 0 46 34" fill="none"><path d="M1 1h41v32H1z" fill="#faf9f8" stroke="#555"/><path d="M1 11h41M1 22h41M8 1v32M34 1v32" stroke="#666"/><circle cx="13" cy="6" r="2.500" fill="#2b88d8"/><circle cx="13" cy="17" r="2.500" fill="#e81123"/><circle cx="13" cy="27" r="2.500" fill="#2b88d8"/><path d="M24 6h8M24 17h8M24 27h8" stroke="#666" stroke-width="1.500"/></svg>
    <span class="ml-[8px] mt-[2px]">图标集(<span class="underline">I</span>)</span>
    <svg class="ml-auto w-[9px] h-[16px] -mt-[7px]"><use href="#right"/></svg>
  </div>
  <div class="h-[1px] mt-[-1px] bg-[#e1dfdd]"></div>
  <div class="flex items-center h-[43px] mt-[2px] pl-[19px] pr-[13px] bg-[#d0cecc]">
    <svg class="w-[24px] h-[22px]" viewBox="0 0 24 22" fill="none"><path d="M1 1h22v20H1zM1 7h22M1 15h22M7 1v20M17 1v20" stroke="#555"/><path d="M7 7h10v8H7z" fill="#fad98d" stroke="#e07a10" stroke-width="1.500"/></svg>
    <span class="ml-[12px]">新建规则(<span class="underline">N</span>)...</span>
  </div>
  <div class="flex items-center h-[43px] pl-[19px] pr-[13px]">
    <svg class="w-[24px] h-[24px]" viewBox="0 0 24 24" fill="none"><path d="M1 1h22v20H1zM1 7h22M1 15h22M7 1v20" stroke="#555"/><path d="M7 7h8v8H7z" fill="#fad98d" stroke="#e07a10" stroke-width="1.500"/><path d="M17 9l6 5-7 9-6-5z" fill="#c586c8" stroke="#a349a4" stroke-width="1.300"/></svg>
    <span class="ml-[12px]">清除规则(<span class="underline">C</span>)</span>
    <svg class="ml-auto w-[9px] h-[16px]"><use href="#right"/></svg>
  </div>
  <div class="flex items-center h-[43px] pl-[19px] pr-[13px]">
    <svg class="w-[24px] h-[24px]" viewBox="0 0 24 24" fill="none"><path d="M1 23V1h20" stroke="#555"/><path d="M3 3h20v20H3zM3 9h20M3 17h20M9 3v20M17 3v20" stroke="#555"/><path d="M9 9h8v8H9z" fill="#fad98d" stroke="#e07a10" stroke-width="1.500"/></svg>
    <span class="ml-[12px]">管理规则(<span class="underline">R</span>)...</span>
  </div>
</div>

<!-- Red annotation rectangle -->
<div class="absolute left-[952px] top-[532px] w-[428px] h-[113px] border-[3px] border-[#f23535]"></div>
</body>
</html>
